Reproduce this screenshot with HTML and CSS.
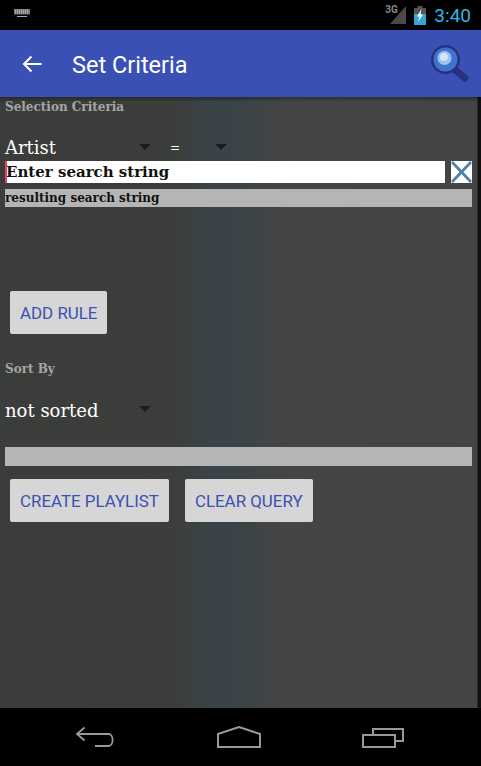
FILE: index.html
```html
<!DOCTYPE html>
<html lang="en">
<head>
  <meta charset="UTF-8" />
  <meta name="viewport" content="width=device-width, initial-scale=1.0" />
  <title>Set Criteria</title>
  <link rel="stylesheet" href="styles.css">
</head>
<body>
  <!-- Status bar -->
  <div class="status-bar">
    <svg class="keyboard-icon" width="18" height="10" viewBox="0 0 18 10">
      <path d="M1 1h16v5.500H1z" fill="#777" />
      <path d="M2 2h14M2 3.500h14M2 5h14" stroke="#bbb" stroke-width="1" stroke-dasharray="1 1" />
      <path d="M4 8.500h10" stroke="#aaa" stroke-width="1" />
    </svg>
    <div class="status-right">
      <span class="net-label">3G</span>
      <svg class="signal-icon" width="16" height="18" viewBox="0 0 16 18">
        <path d="M16 0v18H0z" fill="#4a4a4a" />
      </svg>
      <svg class="battery-icon" width="12" height="19" viewBox="0 0 12 19">
        <path d="M3.500 0h5v2h3.500v6H0V2h3.500z" fill="#555" />
        <path d="M0 8h12v11H0z" fill="#33a5d6" />
        <path d="M7.500 3 3 10.500h2.500L4 16l5-7.500H6.500z" fill="#fff" />
      </svg>
      <span class="clock">3:40</span>
    </div>
  </div>

  <!-- App bar -->
  <header class="app-bar">
    <svg class="back-icon" width="20" height="18" viewBox="0 0 20 18">
      <path d="M19.500 9H2.500M9.500 1.500 2 9l7.500 7.500" fill="none" stroke="#fff" stroke-width="2" />
    </svg>
    <h1 class="app-title">Set Criteria</h1>
    <svg class="search-icon" width="40" height="40" viewBox="0 0 40 40">
      <path d="M24 25 35 34" stroke="#27317f" stroke-width="7" stroke-linecap="round" />
      <circle cx="15.500" cy="15.500" r="14.500" fill="#27317f" />
      <circle cx="15.500" cy="15.500" r="12" fill="#3f73d0" />
      <circle cx="14.500" cy="14" r="7" fill="#9cc4ee" />
      <circle cx="14" cy="13" r="4" fill="#d4e6f8" />
    </svg>
  </header>

  <main class="content">
    <div class="section-label first-label">Selection Criteria</div>

    <div class="rule-row">
      <div class="spinner artist-spinner">
        <span class="spinner-text">Artist</span>
        <span class="caret"></span>
      </div>
      <div class="spinner op-spinner">
        <span class="op-text">=</span>
        <span class="caret"></span>
      </div>
    </div>

    <div class="search-row">
      <div class="search-input">
        <span class="cursor"></span>
        <span>Enter search string</span>
      </div>
      <svg class="clear-icon" width="21" height="22" viewBox="0 0 22 22" preserveAspectRatio="none">
        <path d="M0 0h22v22H0z" fill="#fff" />
        <path d="M1 1l20 20M21 1 1 21" stroke="#4f83a6" stroke-width="3" />
      </svg>
    </div>

    <div class="result-bar">resulting search string</div>

    <button class="btn add-rule">ADD RULE</button>

    <div class="section-label sort-label">Sort By</div>

    <div class="spinner sort-spinner">
      <span class="spinner-text sort-text">not sorted</span>
      <span class="caret"></span>
    </div>

    <div class="result-bar empty-bar"></div>

    <div class="button-row">
      <button class="btn">CREATE PLAYLIST</button>
      <button class="btn">CLEAR QUERY</button>
    </div>
  </main>

  <!-- Navigation bar -->
  <nav class="nav-bar">
    <svg width="40" height="22" viewBox="0 0 40 22">
      <path d="M9.500 1.500 2 8l7.500 6.500M2.500 8h31c5.500 0 5.500 12 0 12H20" fill="none" stroke="#999" stroke-width="1.800" />
    </svg>
    <svg width="44" height="22" viewBox="0 0 44 22">
      <path d="M1 21V8L22 1l21 7v13z" fill="none" stroke="#999" stroke-width="2" />
    </svg>
    <svg width="42" height="22" viewBox="0 0 42 22">
      <path d="M1 9h32v12H1zM11 9V3h30v12h-8" fill="none" stroke="#999" stroke-width="2" />
    </svg>
  </nav>
</body>
</html>
```
FILE: styles.css
```css
/* Base Reset */
*, *::before, *::after {
  box-sizing: border-box;
  margin: 0;
  padding: 0;
}
body {
  width: 481px;
  height: 766px;
  overflow: hidden;
  display: flex;
  flex-direction: column;
  font-family: "DejaVu Serif", serif;
  background: #000;
}

/* Status bar */
.status-bar {
  height: 30px;
  flex: none;
  background: #000;
  display: flex;
  align-items: center;
  justify-content: space-between;
  padding: 0 10px 0 13px;
}
.keyboard-icon { margin-bottom: 4px; }
.status-right {
  display: flex;
  align-items: center;
  position: relative;
}
.net-label {
  position: absolute;
  left: 7px;
  top: 0;
  font: 700 10px "Roboto", sans-serif;
  color: #888;
}
.signal-icon { margin-left: 12px; margin-right: 8px; }
.clock {
  margin-left: 8px;
  font: 400 19px "Roboto", sans-serif;
  color: #33b5e5;
}

/* App bar */
.app-bar {
  height: 67px;
  flex: none;
  background: #3b50b5;
  display: flex;
  align-items: center;
  padding: 0 11px 0 22px;
  position: relative;
  z-index: 1;
}
.back-icon { flex: none; }
.app-title {
  flex: 1;
  margin-left: 30px;
  padding-top: 2px;
  font: 400 23.5px "Roboto", sans-serif;
  color: #fff;
}

/* Main content */
.content {
  flex: 1;
  padding: 0 9px 0 5px;
  display: flex;
  flex-direction: column;
  align-items: flex-start;
  background:
    linear-gradient(to bottom, rgba(0,0,0,0.35), rgba(0,0,0,0) 5px),
    linear-gradient(to right, #3b3d3b 0, #3c3e3c 180px, #3a4347 210px, #3a4347 235px, #444544 285px, #434443 477px, #111 478px);
}
.section-label {
  font-size: 12px;
  font-weight: 700;
  color: #a5a5a5;
  line-height: 16px;
}
.first-label { margin-top: 2px; }
.sort-label { margin-top: 27px; }

/* Spinners */
.rule-row {
  display: flex;
  margin-top: 23px;
  height: 19px;
}
.spinner {
  display: flex;
  align-items: center;
  position: relative;
}
.artist-spinner { width: 165px; }
.op-spinner { width: 60px; }
.spinner-text {
  font-size: 18px;
  color: #fff;
}
.op-text {
  font-size: 12px;
  color: #fff;
}
.caret {
  position: absolute;
  top: 6px;
  border-left: 6px solid transparent;
  border-right: 6px solid transparent;
  border-top: 6px solid #1c1c1c;
}
.artist-spinner .caret { right: 19px; }
.op-spinner .caret { right: 3px; }

/* Search row */
.search-row {
  display: flex;
  align-self: stretch;
  margin-top: 4px;
  height: 22px;
}
.search-input {
  flex: 1;
  background: #fff;
  display: flex;
  align-items: center;
  font-size: 15px;
  font-weight: 700;
  color: #111;
  position: relative;
  padding-left: 1px;
}
.cursor {
  position: absolute;
  left: 0;
  top: 0;
  width: 2px;
  height: 22px;
  background: #e83e6c;
}
.clear-icon { flex: none; margin-left: 6px; }

/* Grey bars */
.result-bar {
  align-self: stretch;
  height: 18px;
  margin-top: 6px;
  background: #b5b5b5;
  color: #111;
  font-size: 12px;
  font-weight: 700;
  line-height: 18px;
}
.empty-bar { height: 19px; margin-top: 24px; }

/* Buttons */
.btn {
  height: 43px;
  padding: 0 10px;
  border: none;
  border-radius: 2px;
  background: #d6d6d6;
  color: #3b50b5;
  font: 400 16.9px "Roboto", sans-serif;
}
.add-rule { margin: 84px 0 0 5px; }
.sort-spinner { width: 152px; height: 26px; margin-top: 20px; }
.sort-spinner .caret { top: 9px; right: 6px; }
.sort-text { font-size: 18px; }
.button-row {
  display: flex;
  gap: 16px;
  margin: 13px 0 0 5px;
}

/* Navigation bar */
.nav-bar {
  height: 58px;
  flex: none;
  background: #000;
  display: flex;
  align-items: center;
  justify-content: space-between;
  padding: 0 77px 0 75px;
}
```
